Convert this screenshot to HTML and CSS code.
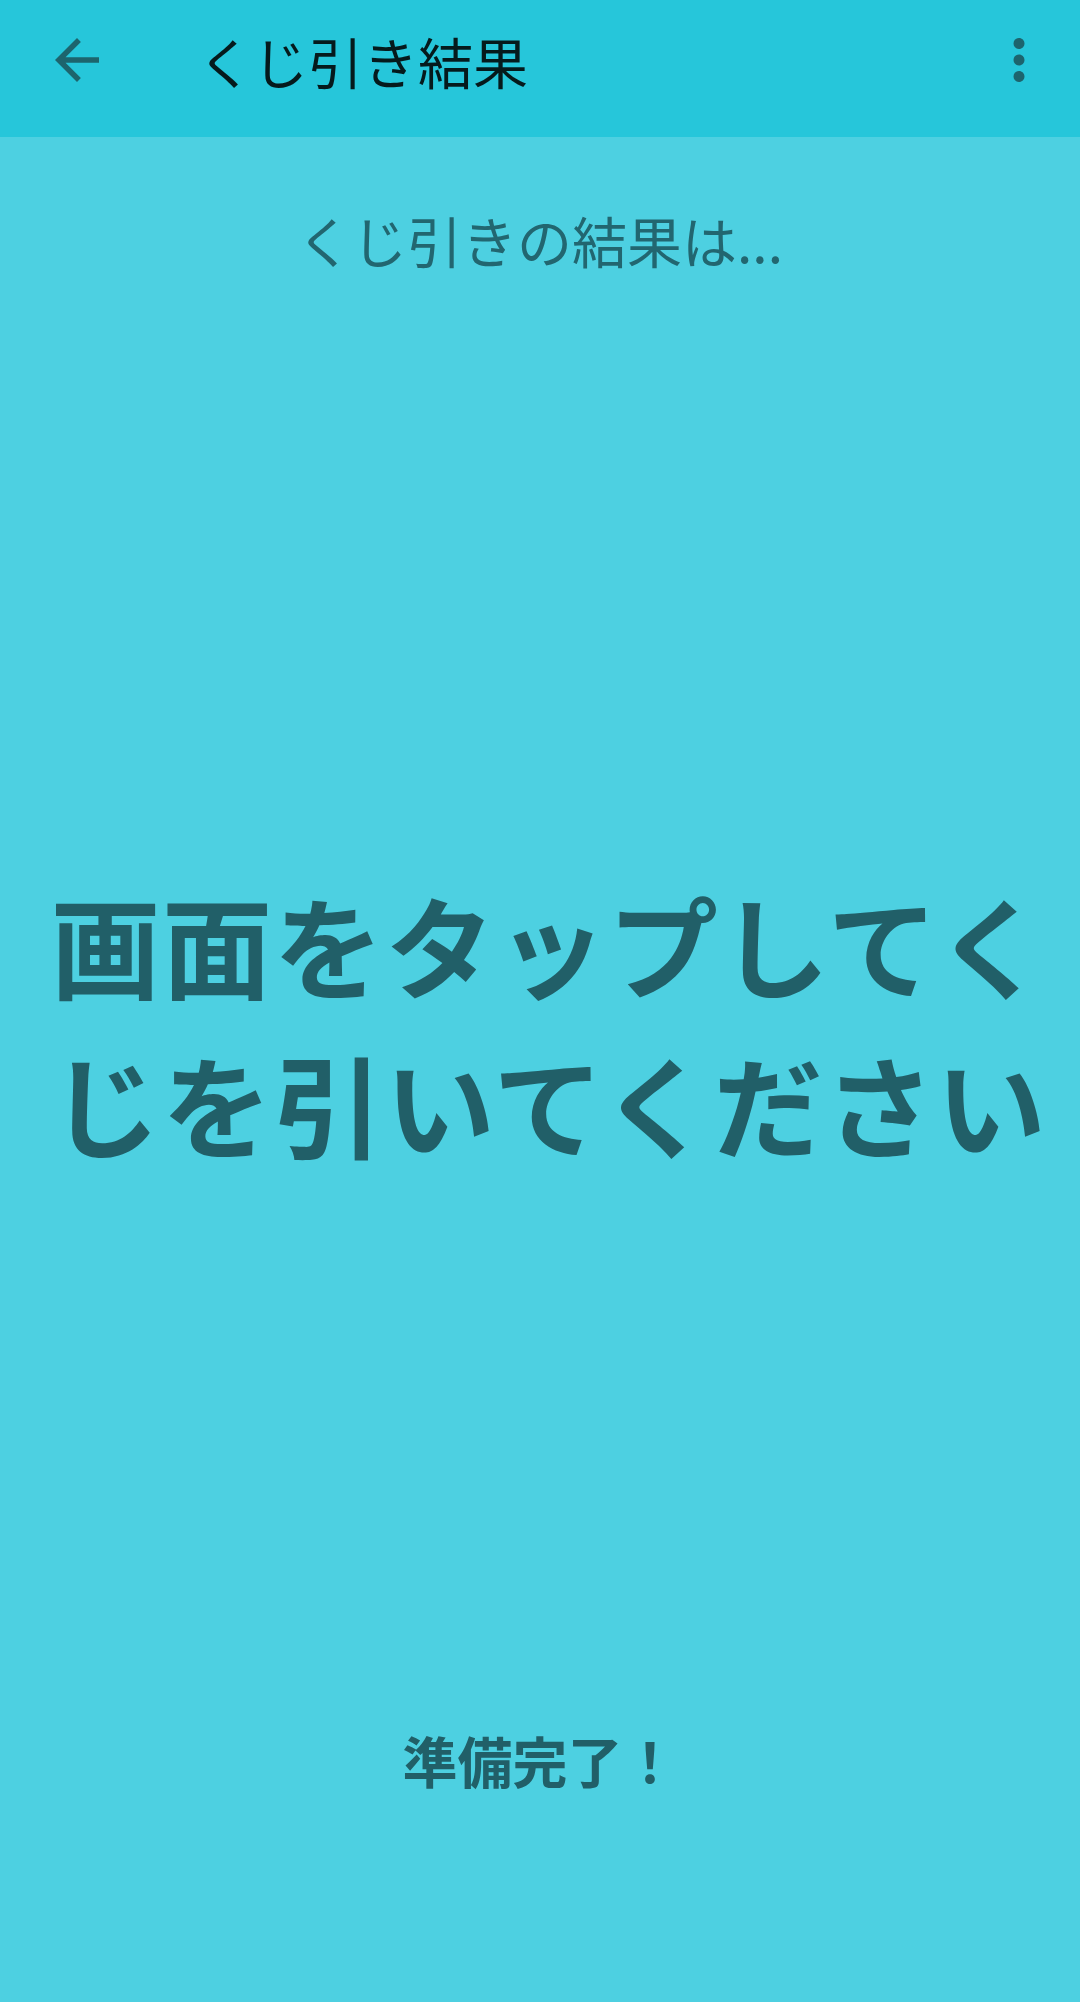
FILE: index.html
```html
<!DOCTYPE html>
<html lang="ja">
<head>
<meta charset="utf-8">
<title>くじ引き結果</title>
<link rel="stylesheet" href="styles.css">
</head>
<body>
<div class="app">
  <header class="toolbar">
    <div class="toolbar-row">
      <span class="icon-btn back">
        <svg viewBox="0 0 24 24" width="66" height="66"><path d="M20 11H7.83l5.59-5.59L12 4l-8 8 8 8 1.41-1.41L7.83 13H20v-2z"/></svg>
      </span>
      <h1 class="title">くじ引き結果</h1>
      <span class="icon-btn more">
        <svg viewBox="0 0 24 24" width="66" height="66"><path d="M12 8c1.1 0 2-.9 2-2s-.9-2-2-2-2 .9-2 2 .9 2 2 2zm0 2c-1.1 0-2 .9-2 2s.9 2 2 2 2-.9 2-2-.9-2-2-2zm0 6c-1.1 0-2 .9-2 2s.9 2 2 2 2-.9 2-2-.9-2-2-2z"/></svg>
      </span>
    </div>
  </header>
  <main class="content">
    <p class="subtitle">くじ引きの結果は...</p>
    <p class="main-text">画面をタップしてくじを引いてください</p>
    <p class="status">準備完了！</p>
  </main>
</div>
</body>
</html>
```

FILE: styles.css
```css
html, body {
  margin: 0;
  padding: 0;
}
body {
  width: 1080px;
  height: 2002px;
  background: #4dd0e1;
  font-family: "Noto Sans CJK JP", "Noto Sans", sans-serif;
  overflow: hidden;
}
.app {
  display: flex;
  flex-direction: column;
  height: 2002px;
}
.toolbar {
  background: #26c6da;
  height: 137px;
  box-sizing: border-box;
  padding-bottom: 17px;
}
.toolbar-row {
  display: flex;
  align-items: center;
  height: 120px;
  padding: 0 28px 0 44px;
}
.icon-btn {
  display: flex;
  width: 66px;
  height: 66px;
}
.icon-btn svg {
  fill: #1d646d;
}
.title {
  margin: 0 0 0 88px;
  flex: 1;
  font-size: 55px;
  line-height: 80px;
  font-weight: 400;
  color: rgba(0, 0, 0, 0.87);
}
.content {
  display: flex;
  flex-direction: column;
  align-items: center;
  padding-top: 62px;
}
.subtitle {
  margin: 0;
  font-size: 55px;
  line-height: 80px;
  color: #226670;
}
.main-text {
  margin: 585px 0 0;
  width: 1080px;
  box-sizing: border-box;
  padding-left: 18px;
  font-size: 110px;
  line-height: 159px;
  letter-spacing: 1.5px;
  font-weight: 700;
  text-align: center;
  color: #215f68;
}
.status {
  margin: 537px 0 0;
  font-size: 55px;
  line-height: 80px;
  font-weight: 700;
  color: #215f68;
}
```
